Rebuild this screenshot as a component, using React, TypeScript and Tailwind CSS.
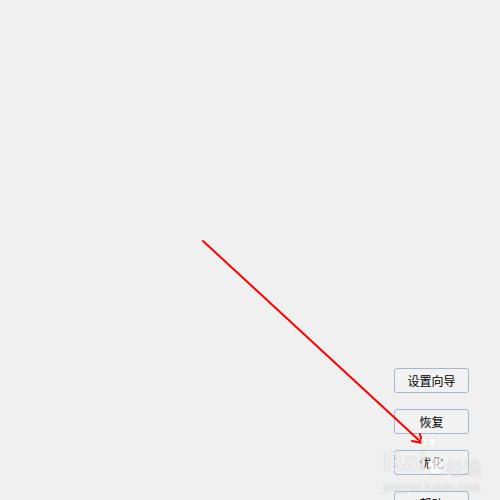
const labels = ["设置向导", "恢复", "优化", "帮助"];

const App = () => {
  return (
    <div
      className="relative w-[500px] h-[500px] overflow-hidden bg-[#f0f0f0]"
      style={{ fontFamily: '"Noto Sans CJK SC", "Noto Sans", sans-serif' }}
    >
      {/* buttons column */}
      <div className="flex flex-col items-start gap-[16px] pt-[368px] pl-[394px]">
        {labels.map((label) => (
          <button
            key={label}
            className="w-[75px] h-[25px] shrink-0 flex items-center justify-center rounded-[3px] border border-[#a6b8cc] bg-[#f2f2f2] text-[12px] leading-none text-black"
          >
            {label}
          </button>
        ))}
      </div>

      {/* red annotation arrow */}
      <svg
        className="absolute left-0 top-0 pointer-events-none"
        width="500"
        height="500"
        viewBox="0 0 500 500"
      >
        <path
          d="M203 241 L422 443"
          stroke="#ff0000"
          strokeWidth="2"
          fill="none"
          strokeLinecap="round"
        />
        <path
          d="M412 441 L422 443 L420 434"
          stroke="#ff0000"
          strokeWidth="2"
          fill="none"
          strokeLinecap="round"
          strokeLinejoin="round"
        />
      </svg>

      {/* baidu jingyan watermark */}
      <div className="absolute left-[383px] top-[448px] flex flex-col items-start pointer-events-none select-none">
        <div className="relative flex items-end">
          <span
            className="text-[28px] font-bold leading-none text-white/80"
            style={{ fontFamily: '"Liberation Sans", Arial, sans-serif', textShadow: "0 0 1px rgba(0,0,0,0.3)" }}
          >
            Bai
          </span>
          <span className="ml-[1px] mb-[2px] w-[16px] h-[16px] rounded-full bg-white/70 shadow-[0_0_1px_rgba(0,0,0,0.3)]" />
          <span
            className="ml-[2px] text-[18px] leading-none text-white/80"
            style={{ textShadow: "0 0 1px rgba(0,0,0,0.3)" }}
          >
            经验
          </span>
          <div className="absolute left-[38px] top-[-10px] flex gap-[2px]">
            <span className="w-[6px] h-[8px] rounded-full bg-white/70 shadow-[0_0_1px_rgba(0,0,0,0.3)]" />
            <span className="w-[6px] h-[8px] rounded-full bg-white/70 shadow-[0_0_1px_rgba(0,0,0,0.3)]" />
          </div>
        </div>
        <span
          className="mt-[4px] text-[13px] leading-none text-white/80"
          style={{ fontFamily: '"Liberation Serif", serif', textShadow: "0 0 1px rgba(0,0,0,0.3)" }}
        >
          jingyan.baidu.com
        </span>
      </div>
    </div>
  );
};

export default App;
